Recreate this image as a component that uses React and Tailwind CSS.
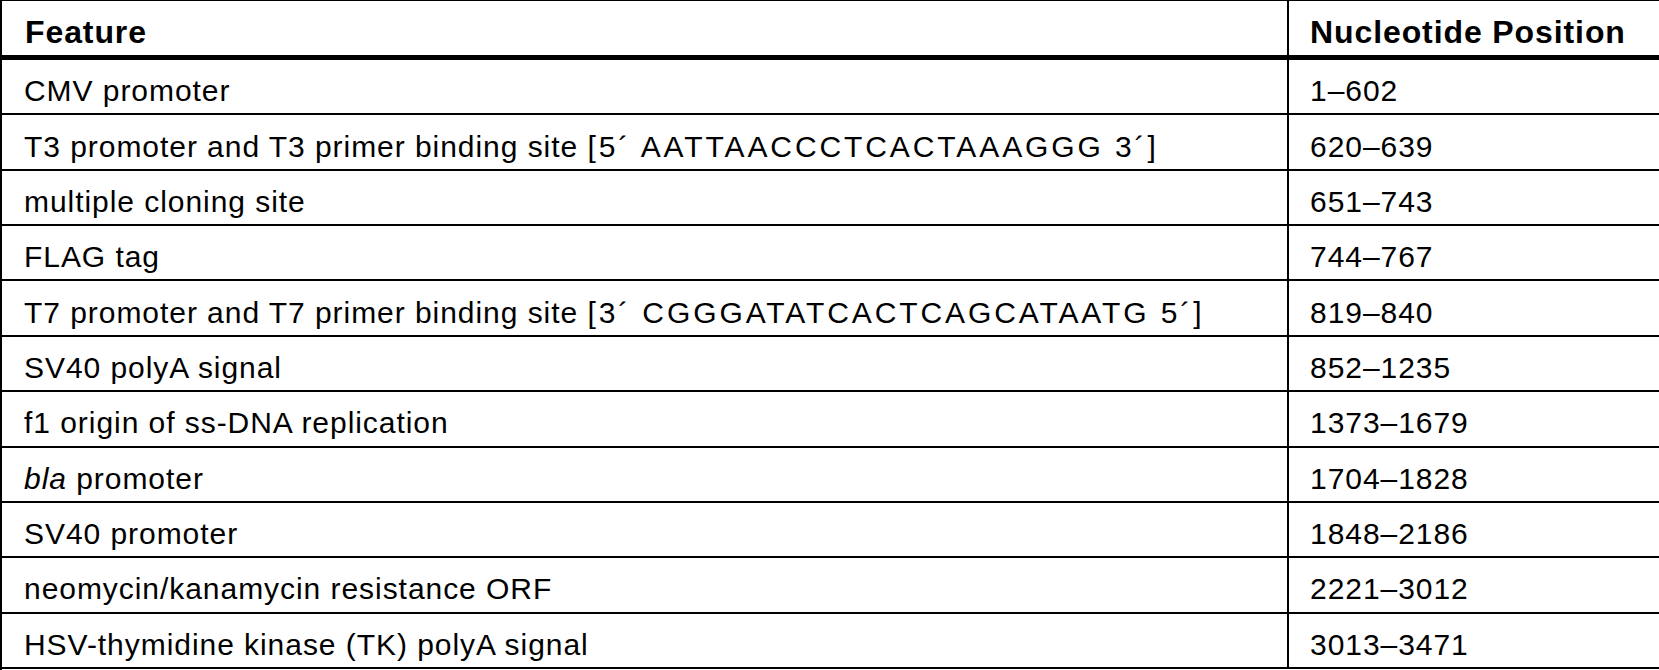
import React from "react";

const Seq = ({ children }) => <span className="tracking-[2.9px]">{children}</span>;

const rows = [
  [<>CMV promoter</>, "1–602"],
  [<>T3 promoter and T3 primer binding site <Seq>[5´ AATTAACCCTCACTAAAGGG 3´]</Seq></>, "620–639"],
  [<>multiple cloning site</>, "651–743"],
  [<>FLAG tag</>, "744–767"],
  [<>T7 promoter and T7 primer binding site <Seq>[3´ CGGGATATCACTCAGCATAATG 5´]</Seq></>, "819–840"],
  [<>SV40 polyA signal</>, "852–1235"],
  [<>f1 origin of ss-DNA replication</>, "1373–1679"],
  [<><i>bla</i> promoter</>, "1704–1828"],
  [<>SV40 promoter</>, "1848–2186"],
  [<>neomycin/kanamycin resistance ORF</>, "2221–3012"],
  [<>HSV-thymidine kinase (TK) polyA signal</>, "3013–3471"],
];

export default function App() {
  return (
    <div
      className="w-[1659px] h-[670px] bg-white text-black border-t border-l-2 border-black overflow-hidden"
      style={{ fontFamily: '"Liberation Sans", Arial, sans-serif' }}
    >
      <div className="grid grid-cols-[1287px_1fr] h-[59px] border-b-[5px] border-black text-[32px] font-bold tracking-[0.9px]">
        <div className="border-r-2 border-black pl-[23px] flex items-center pt-[7px]">
          <span>Feature</span>
        </div>
        <div className="pl-[21px] flex items-center pt-[7px]">
          <span>Nucleotide Position</span>
        </div>
      </div>
      {rows.map(([a, b], i) => (
        <div
          key={i}
          className="grid grid-cols-[1287px_1fr] h-[55.36px] border-b-2 border-black text-[30px] tracking-[0.95px]"
        >
          <div className="border-r-2 border-black pl-[22px] flex items-center pt-[8px]">
            <span className="whitespace-pre">{a}</span>
          </div>
          <div className="pl-[21px] flex items-center pt-[8px]">
            <span>{b}</span>
          </div>
        </div>
      ))}
    </div>
  );
}
